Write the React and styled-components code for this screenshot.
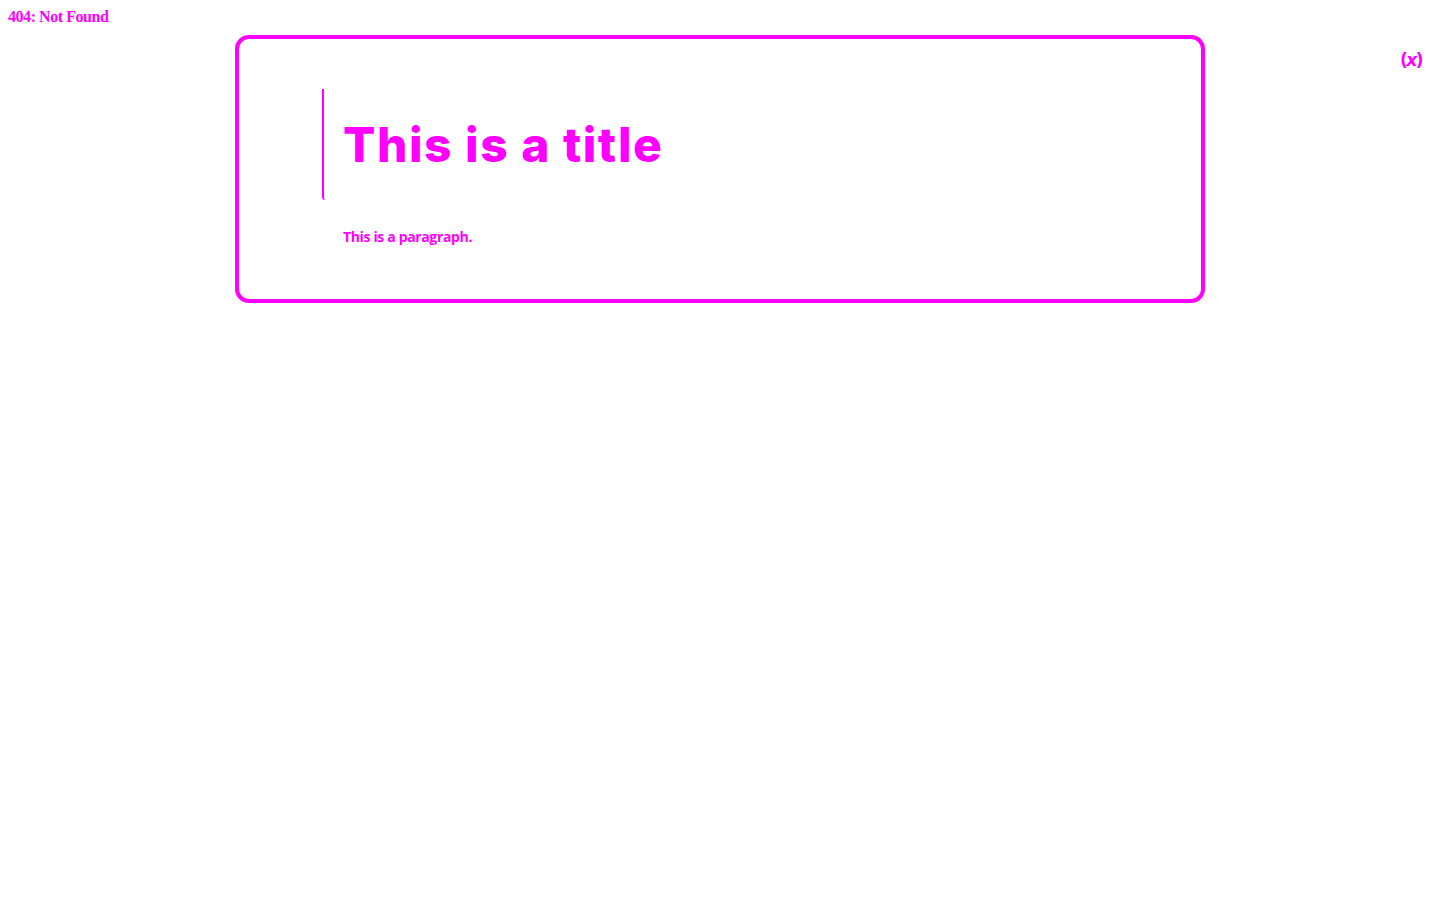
import React from 'react';
import styled, { createGlobalStyle } from 'styled-components';

const GlobalStyle = createGlobalStyle`
    body {
        margin: 8px;
        background: #ffffff;
        color: #ff00ff;
        font-family: "Liberation Serif", serif;
    }
`

const StatusLine = styled.div`
    font-family: "Liberation Serif", serif;
    font-weight: 700;
    font-size: 16px;
    line-height: 18px;
    color: #ff00ff;
    letter-spacing: -0.45px;
`

const Stage = styled.div`
    display: grid;
    grid-template-columns: 1fr 970px 1fr;
    margin-top: 9px;
`

const Card = styled.section`
    grid-column: 2;
    box-sizing: border-box;
    border: 4px solid #ff00ff;
    border-radius: 14px;
    padding: 50px 0 52px 83px;
`

const TitleBlock = styled.div`
    display: flex;
    align-items: center;
    height: 111px;
    border-left: 2px solid #ff00ff;
    border-bottom-left-radius: 3px;
    padding-left: 19px;
`

const Title = styled.h1`
    margin: 0;
    font-family: Inter, "Noto Sans", sans-serif;
    font-weight: 800;
    font-size: 48px;
    letter-spacing: 1.5px;
    color: #ff00ff;
`

const Paragraph = styled.p`
    margin: 27px 0 0 21px;
    font-family: "Open Sans", sans-serif;
    font-weight: 700;
    font-size: 14px;
    line-height: 20px;
    letter-spacing: -0.35px;
    color: #ff00ff;
`

const CloseMark = styled.button`
    grid-column: 3;
    justify-self: end;
    align-self: start;
    margin: 15px 10px 0 0;
    padding: 0;
    border: none;
    background: none;
    font-family: "DejaVu Sans", sans-serif;
    font-weight: 700;
    font-size: 17px;
    letter-spacing: -1.5px;
    color: #ff00ff;
    cursor: pointer;
    em { font-style: italic; }
`

export default function App() {
    return (
        <>
            <GlobalStyle />
            <StatusLine>404: Not Found</StatusLine>
            <Stage>
                <Card>
                    <TitleBlock>
                        <Title>This is a title</Title>
                    </TitleBlock>
                    <Paragraph>This is a paragraph.</Paragraph>
                </Card>
                <CloseMark type='button'>(<em>x</em>)</CloseMark>
            </Stage>
        </>
    );
}
